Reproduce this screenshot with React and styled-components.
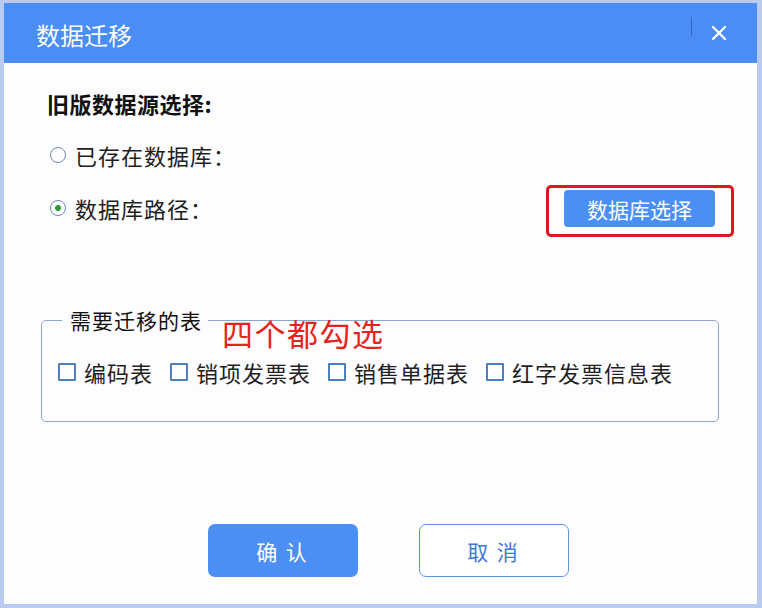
import React, { useState } from "react";
import styled, { createGlobalStyle } from "styled-components";

const GlobalStyle = createGlobalStyle`
  html, body {
    margin: 0;
    padding: 0;
    background: #b9cbf1;
  }
  body {
    font-family: "Noto Sans CJK SC", "Noto Sans", sans-serif;
    color: #1f1f1f;
  }
`;

const Frame = styled.div`
  width: 762px;
  height: 608px;
  box-sizing: border-box;
  padding: 3px 5px 4px 4px;
  display: flex;
`;

const Dialog = styled.div`
  flex: 1;
  display: flex;
  flex-direction: column;
  background: #fdfcfe;
`;

const Header = styled.div`
  height: 60px;
  flex-shrink: 0;
  background: #4a8df5;
  display: flex;
  align-items: center;
  padding: 4px 0 0 32px;
  box-sizing: border-box;
`;

const Title = styled.div`
  flex: 1;
  color: #ffffff;
  font-size: 24px;
  line-height: 30px;
`;

const Divider = styled.span`
  width: 1px;
  height: 19px;
  background: #3565c4;
  margin: -18px 9px 0 0;
`;

const CloseButton = styled.button`
  width: 36px;
  height: 36px;
  margin-right: 20px;
  margin-top: -4px;
  border: none;
  background: transparent;
  padding: 0;
  display: flex;
  align-items: center;
  justify-content: center;
  cursor: pointer;
`;

const Body = styled.div`
  flex: 1;
  display: flex;
  flex-direction: column;
  padding: 28px 38px 0 37px;
`;

const Source = styled.div`
  display: flex;
  flex-direction: column;
  padding: 0 0 0 6px;
  margin-right: -15px;
`;

const Heading = styled.div`
  font-size: 22px;
  font-weight: bold;
  line-height: 24px;
  letter-spacing: 0.5px;
  color: #111;
`;

const OptionRow = styled.div`
  display: flex;
  align-items: center;
  height: ${(p) => p.$h}px;
  margin-top: ${(p) => p.$gap}px;
`;

const RadioLabel = styled.label`
  display: flex;
  align-items: center;
  flex: 1;
  font-size: 22px;
  letter-spacing: 1px;
  cursor: pointer;
  margin-top: ${(p) => p.$shift || 0}px;
`;

const RadioDot = styled.span`
  width: 16px;
  height: 16px;
  box-sizing: border-box;
  border-radius: 50%;
  border: 1px solid #6d88ad;
  background: #fff;
  margin: 0 9px 0 3px;
  display: flex;
  align-items: center;
  justify-content: center;
  &::after {
    content: "";
    width: 6px;
    height: 6px;
    border-radius: 50%;
    background: ${(p) => (p.$on ? "#2e9a3a" : "transparent")};
  }
`;

const Highlight = styled.div`
  border: 3px solid #e3151c;
  border-radius: 5px;
  padding: 2px 16px 7px 15px;
`;

const PickButton = styled.button`
  width: 151px;
  height: 37px;
  border: none;
  border-radius: 4px;
  background: #4a8ff3;
  color: #fff;
  font-family: inherit;
  font-size: 21px;
  padding: 0;
  cursor: pointer;
`;

const TableSet = styled.fieldset`
  position: relative;
  margin: 71px 0 0 0;
  border: 1px solid #8da6cf;
  border-radius: 5px;
  padding: 0 16px 37px 16px;
`;

const Legend = styled.legend`
  font-size: 21px;
  line-height: 24px;
  letter-spacing: 1px;
  padding: 0 6px 0 8px;
  margin-left: 4px;
  color: #111;
`;

const Note = styled.span`
  position: absolute;
  left: 180px;
  top: -16px;
  color: #e5231d;
  font-size: 31px;
  line-height: 34px;
  letter-spacing: 1.5px;
`;

const CheckRow = styled.div`
  display: flex;
  align-items: center;
  gap: 17px;
  height: 24px;
  margin-top: 28px;
`;

const CheckItem = styled.label`
  display: flex;
  align-items: center;
  gap: 8px;
  font-size: 22px;
  letter-spacing: 1px;
  cursor: pointer;
`;

const Box = styled.span`
  width: 18px;
  height: 18px;
  box-sizing: border-box;
  border: 2px solid #4d80bf;
  border-radius: 1px;
  background: #fff;
  display: flex;
  align-items: center;
  justify-content: center;
  color: #4d80bf;
  font-size: 13px;
  line-height: 1;
`;

const Footer = styled.div`
  display: flex;
  justify-content: center;
  gap: 61px;
  margin-top: 102px;
  padding-left: 16px;
`;

const ActionButton = styled.button`
  width: 150px;
  height: 53px;
  border-radius: 7px;
  font-family: inherit;
  font-size: 21px;
  letter-spacing: 2px;
  cursor: pointer;
  border: ${(p) => (p.$primary ? "none" : "1.5px solid #5b94e4")};
  background: ${(p) => (p.$primary ? "#4c8ff2" : "#ffffff")};
  color: ${(p) => (p.$primary ? "#ffffff" : "#3d79d6")};
`;

const tables = ["编码表", "销项发票表", "销售单据表", "红字发票信息表"];

export default function App() {
  const [source, setSource] = useState("path");
  const [checked, setChecked] = useState({});

  const toggle = (name) =>
    setChecked((c) => ({ ...c, [name]: !c[name] }));

  return (
    <>
      <GlobalStyle />
      <Frame>
        <Dialog>
          <Header>
            <Title>数据迁移</Title>
            <Divider />
            <CloseButton aria-label="关闭">
              <svg width="16" height="16" viewBox="0 0 16 16">
                <path
                  d="M2 2 L14 14 M14 2 L2 14"
                  stroke="#fff"
                  strokeWidth="2.4"
                  strokeLinecap="round"
                />
              </svg>
            </CloseButton>
          </Header>
          <Body>
            <Source>
              <Heading>旧版数据源选择:</Heading>
              <OptionRow $h={30} $gap={25}>
                <RadioLabel onClick={() => setSource("db")}>
                  <RadioDot $on={source === "db"} />
                  已存在数据库：
                </RadioLabel>
              </OptionRow>
              <OptionRow $h={52} $gap={15}>
                <RadioLabel $shift={-6} onClick={() => setSource("path")}>
                  <RadioDot $on={source === "path"} />
                  数据库路径：
                </RadioLabel>
                <Highlight>
                  <PickButton>数据库选择</PickButton>
                </Highlight>
              </OptionRow>
            </Source>
            <TableSet>
              <Legend>需要迁移的表</Legend>
              <Note>四个都勾选</Note>
              <CheckRow>
                {tables.map((t) => (
                  <CheckItem key={t} onClick={() => toggle(t)}>
                    <Box>{checked[t] ? "✓" : ""}</Box>
                    {t}
                  </CheckItem>
                ))}
              </CheckRow>
            </TableSet>
            <Footer>
              <ActionButton $primary>确 认</ActionButton>
              <ActionButton>取 消</ActionButton>
            </Footer>
          </Body>
        </Dialog>
      </Frame>
    </>
  );
}
